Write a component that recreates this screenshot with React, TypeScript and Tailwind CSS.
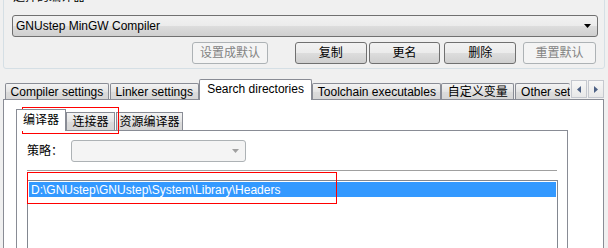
import React from 'react';

// Win7 style widgets
const btnOn =
  'flex h-[22px] items-center justify-center rounded-[3px] border border-[#707070] bg-[linear-gradient(to_bottom,#f2f2f2,#ebebeb_50%,#dddddd_50%,#cfcfcf)] text-black';
const btnOff =
  'flex h-[22px] items-center justify-center rounded-[3px] border border-[#adb2b5] bg-[#f4f4f4] text-[#838383]';
const tabOff =
  'flex h-[16px] items-center justify-center overflow-hidden whitespace-nowrap rounded-t-[2px] border border-b-0 border-[#898c95] bg-[linear-gradient(to_bottom,#f3f3f3,#e4e4e4_50%,#dcdcdc_50%,#d6d6d6)] leading-none';
const subOff =
  'flex h-[18px] items-center justify-center whitespace-nowrap border border-b-0 border-[#898c95] bg-[linear-gradient(to_bottom,#f3f3f3,#e4e4e4_50%,#dcdcdc_50%,#d6d6d6)] leading-none';

const Spin: React.FC<{ dir: 'l' | 'r' }> = ({ dir }) => (
  <div className="flex h-[18px] w-[16px] items-center justify-center border border-[#c5c8cf] bg-[linear-gradient(to_bottom,#f7f7f7,#e8e8e8)]">
    <svg width="4" height="7" viewBox="0 0 4 7">
      {dir === 'l' ? <path d="M4 0 L0 3.5 L4 7 Z" fill="#4d6185" /> : <path d="M0 0 L4 3.5 L0 7 Z" fill="#4d6185" />}
    </svg>
  </div>
);

const App: React.FC = () => {
  return (
    <div className="relative h-[248px] w-[608px] overflow-hidden bg-[#f0f0f0] font-['Liberation_Sans','Noto_Sans_CJK_SC',sans-serif] text-[12px] text-black">
      {/* compiler group */}
      <div className="relative mx-[3px] mt-[-8px] h-[77px] w-[602px] rounded-[3px] border border-[#d5dfe5] px-[8px] pt-[22px]">
        <div className="absolute left-[7px] top-[-3px] bg-[#f0f0f0] px-[2px] leading-[14px]">选择的编译器</div>
        <div className="flex h-[22px] w-[586px] items-center justify-between rounded-[3px] border border-[#707070] bg-[linear-gradient(to_bottom,#f2f2f2,#ebebeb_50%,#dddddd_50%,#cfcfcf)] pl-[3px] pr-[6px]">
          <span>GNUstep MinGW Compiler</span>
          <svg width="7" height="4" viewBox="0 0 7 4">
            <path d="M0 0 H7 L3.5 4 Z" fill="#000" />
          </svg>
        </div>
        <div className="mt-[5px] flex">
          <div className={`${btnOff} ml-[180px] w-[76px]`}>设置成默认</div>
          <div className={`${btnOn} ml-[27px] w-[72px]`}>复制</div>
          <div className={`${btnOn} ml-[2px] w-[72px]`}>更名</div>
          <div className={`${btnOn} ml-[4px] w-[72px]`}>删除</div>
          <div className={`${btnOff} ml-[7px] w-[73px]`}>重置默认</div>
        </div>
      </div>

      {/* main tabs */}
      <div className="ml-[3px] mt-[10px] flex h-[20px] w-[601px] items-end">
        <div className={`${tabOff} ml-[2px] w-[104px]`}>Compiler settings</div>
        <div className={`${tabOff} ml-[1px] w-[89px]`}>Linker settings</div>
        <div className="relative z-10 mb-[-1px] flex h-[21px] w-[114px] items-center justify-center rounded-t-[2px] border border-b-0 border-[#898c95] bg-white pb-[2px]">
          Search directories
        </div>
        <div className={`${tabOff} w-[129px]`}>Toolchain executables</div>
        <div className={`${tabOff} w-[73px]`}>自定义变量</div>
        <div className={`${tabOff} ml-[1px] w-[55px] justify-start border-r-0 pl-[5px]`}>Other settings</div>
        <div className="mb-[1px] ml-[1px] flex gap-[1px] self-start pt-[1px]">
          <Spin dir="l" />
          <Spin dir="r" />
        </div>
      </div>

      <div className="ml-[3px] h-[200px] w-[601px] border border-[#898c95] bg-white pl-[12px] pt-[9px]">
        {/* sub tabs */}
        <div className="flex h-[21px] items-end">
          <div className="relative z-10 mb-[-1px] flex h-[22px] w-[50px] items-center justify-center border border-b-0 border-[#898c95] bg-white pb-[2px] leading-none">
            编译器
          </div>
          <div className={`${subOff} w-[49px]`}>连接器</div>
          <div className={`${subOff} ml-[1px] w-[67px]`}>资源编译器</div>
        </div>
        <div className="h-[140px] w-[552px] border border-[#898c95] bg-white pl-[10px] pt-[9px]">
          <div className="flex items-center">
            <span className="w-[44px]">策略：</span>
            <div className="flex h-[22px] w-[175px] items-center justify-end rounded-[3px] border border-[#adb2b5] bg-[#f4f4f4] pr-[6px]">
              <svg width="7" height="4" viewBox="0 0 7 4">
                <path d="M0 0 H7 L3.5 4 Z" fill="#a0a0a0" />
              </svg>
            </div>
          </div>
          <div className="mt-[8px] h-px w-[530px] bg-[#a0a0a0]" />
          <div className="mt-[9px] h-[80px] w-[531px] border border-[#828790] bg-white">
            <div className="ml-[1px] mt-[1px] flex h-[15px] w-[527px] items-center bg-[#3399ff] pl-[2px] leading-none text-white">
              D:\GNUstep\GNUstep\System\Library\Headers
            </div>
          </div>
        </div>
      </div>

      {/* annotations */}
      <div className="pointer-events-none absolute left-[22px] top-[107px] h-[27px] w-[97px] border-[1.5px] border-[#ff0000]" />
      <div className="pointer-events-none absolute left-[27px] top-[172px] h-[32px] w-[310px] border-[1.5px] border-[#ff0000]" />
    </div>
  );
};

export default App;
